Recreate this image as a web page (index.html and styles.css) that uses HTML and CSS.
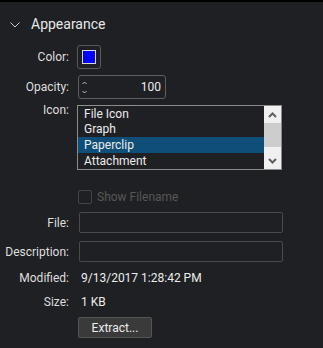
FILE: index.html
```html
<!DOCTYPE html>
<html lang="en">
<head>
  <meta charset="UTF-8">
  <title>Appearance</title>
  <link rel="stylesheet" href="styles.css">
</head>
<body>

  <div class="panel">
    <div class="header">
      <svg class="chevron" width="10" height="6" viewBox="0 0 10 6">
        <path d="M0.5 0.5 L5 5 L9.5 0.5" fill="none" stroke="#d0d0d0" stroke-width="1"/>
      </svg>
      <span>Appearance</span>
    </div>

    <div class="form">
      <div class="row row-color">
        <label>Color:</label>
        <div class="swatch"><div class="swatch-fill"></div></div>
      </div>

      <div class="row row-opacity">
        <label>Opacity:</label>
        <div class="spinner">
          <div class="spin-arrows">
            <svg width="5" height="4" viewBox="0 0 5 4"><path d="M0.5 3 L2.5 1 L4.5 3" fill="none" stroke="#bbb" stroke-width="1"/></svg>
            <svg width="5" height="4" viewBox="0 0 5 4"><path d="M0.5 1 L2.5 3 L4.5 1" fill="none" stroke="#bbb" stroke-width="1"/></svg>
          </div>
          <span class="spin-value">100</span>
        </div>
      </div>

      <div class="row row-icon">
        <label class="top">Icon:</label>
        <div class="listbox">
          <ul class="items">
            <li>File Icon</li>
            <li>Graph</li>
            <li class="selected">Paperclip</li>
            <li>Attachment</li>
          </ul>
          <div class="scrollbar">
            <div class="sb-btn">
              <svg width="9" height="6" viewBox="0 0 9 6"><path d="M1 5 L4.5 1.5 L8 5" fill="none" stroke="#606060" stroke-width="2"/></svg>
            </div>
            <div class="sb-track"><div class="sb-thumb"></div></div>
            <div class="sb-btn">
              <svg width="9" height="6" viewBox="0 0 9 6"><path d="M1 1 L4.5 4.5 L8 1" fill="none" stroke="#606060" stroke-width="2"/></svg>
            </div>
          </div>
        </div>
      </div>

      <div class="row row-check">
        <span></span>
        <div class="check disabled">
          <span class="box"></span>
          <span>Show Filename</span>
        </div>
      </div>

      <div class="row row-file">
        <label>File:</label>
        <div class="textbox"></div>
      </div>

      <div class="row row-desc">
        <label>Description:</label>
        <div class="textbox"></div>
      </div>

      <div class="row row-info">
        <label>Modified:</label>
        <span class="value">9/13/2017 1:28:42 PM</span>
      </div>

      <div class="row row-info">
        <label>Size:</label>
        <span class="value">1 KB</span>
      </div>

      <div class="row row-button">
        <span></span>
        <div><button>Extract...</button></div>
      </div>
    </div>
  </div>

</body>
</html>
```

FILE: styles.css
```css
body {
  margin: 0;
  background: #1f2023;
  font-family: Roboto, "Liberation Sans", sans-serif;
  font-size: 12px;
  color: #dedede;
  height: 348px;
  overflow: hidden;
}

.panel {
  border-top: 2px solid #000;
}

/* Section header */
.header {
  display: flex;
  align-items: center;
  padding-top: 12px;
  height: 20px;
  margin-bottom: 11px;
}

.chevron {
  margin-left: 10px;
  margin-right: 11px;
  margin-top: 1px;
}

.header span {
  font-size: 14px;
  color: #e8e8e8;
}

/* Form rows */
.row {
  display: grid;
  grid-template-columns: 69px 1fr;
  column-gap: 8px;
  align-items: center;
}

.row label {
  text-align: right;
  line-height: 16px;
}

.row label.top {
  align-self: start;
  margin-top: -3px;
}

.row-color { height: 24px; }
.row-opacity { height: 24px; margin-top: 6px; }
.row-icon { margin-top: 6px; }
.row-check { height: 16px; margin-top: 19px; }
.row-file { height: 21px; margin-top: 7px; }
.row-desc { height: 21px; margin-top: 8px; }
.row-info { height: 16px; margin-top: 8px; }
.row-button { height: 21px; margin-top: 7px; }

/* Color swatch */
.swatch {
  width: 22px;
  height: 22px;
  border: 1px solid #595959;
  border-radius: 3px;
  display: flex;
  align-items: center;
  justify-content: center;
}

.swatch-fill {
  width: 12px;
  height: 12px;
  background: #0000ff;
  border: 1px solid #d8d8d8;
}

/* Numeric spinner */
.spinner {
  margin-left: 1px;
  width: 86px;
  height: 22px;
  border: 1px solid #5e5e5e;
  border-radius: 3px;
  display: flex;
  align-items: center;
  justify-content: space-between;
}

.spin-arrows {
  display: flex;
  flex-direction: column;
  gap: 5px;
  margin-left: 3px;
}

.spin-arrows svg {
  display: block;
}

.spin-value {
  margin-right: 4px;
  color: #ececec;
}

/* List box */
.listbox {
  width: 203px;
  height: 63px;
  border: 1px solid #8c8c8c;
  display: flex;
}

.items {
  list-style: none;
  margin: 0;
  padding: 0;
  flex: 1;
}

.items li {
  height: 16px;
  line-height: 16px;
  padding-left: 6px;
  color: #ececec;
}

.items li:first-child {
  height: 15px;
  line-height: 16px;
}

.items li.selected {
  background: #0f4e78;
}

.scrollbar {
  width: 17px;
  background: #f0f0f0;
  display: flex;
  flex-direction: column;
}

.sb-btn {
  height: 17px;
  display: flex;
  align-items: center;
  justify-content: center;
}

.sb-track {
  flex: 1;
}

.sb-thumb {
  height: 24px;
  background: #cdcdcd;
}

/* Checkbox */
.check {
  display: flex;
  align-items: center;
  gap: 5px;
  margin-left: 1px;
}

.check .box {
  width: 12px;
  height: 12px;
  border: 1px solid #444;
  border-radius: 2px;
}

.check.disabled {
  color: #575757;
}

/* Text inputs */
.textbox {
  margin-left: 2px;
  width: 202px;
  height: 19px;
  border: 1px solid #4a4a4a;
  border-radius: 2px;
}

.value {
  margin-left: 4px;
  color: #ececec;
}

button {
  margin-left: 1px;
  width: 74px;
  height: 21px;
  background: #3a3a3a;
  border: 1px solid #555;
  border-radius: 2px;
  color: #ececec;
  font-family: Roboto, "Liberation Sans", sans-serif;
  font-size: 12px;
  padding: 0;
}
```
